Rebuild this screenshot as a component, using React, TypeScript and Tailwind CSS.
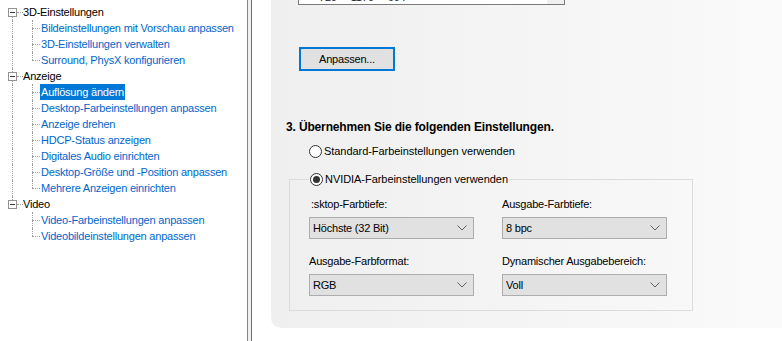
const groups = [
  {
    label: "3D-Einstellungen",
    items: [
      "Bildeinstellungen mit Vorschau anpassen",
      "3D-Einstellungen verwalten",
      "Surround, PhysX konfigurieren",
    ],
  },
  {
    label: "Anzeige",
    items: [
      "Auflösung ändern",
      "Desktop-Farbeinstellungen anpassen",
      "Anzeige drehen",
      "HDCP-Status anzeigen",
      "Digitales Audio einrichten",
      "Desktop-Größe und -Position anpassen",
      "Mehrere Anzeigen einrichten",
    ],
  },
  {
    label: "Video",
    items: ["Video-Farbeinstellungen anpassen", "Videobildeinstellungen anpassen"],
  },
];

const selected = "Auflösung ändern";

function GroupRow({ label, first, last }: { label: string; first: boolean; last: boolean }) {
  return (
    <div className="flex h-4 items-center">
      <div className="flex h-4 w-[17px] flex-col">
        <div className={`ml-[12px] h-[4px] ${first ? "" : "border-l border-dotted border-[#a0a0a0]"}`} />
        <div className="ml-[8px] flex h-[9px] w-[9px] items-center justify-center border border-[#919191] bg-white">
          <div className="h-px w-[5px] bg-[#3c3c3c]" />
        </div>
        <div className={`ml-[12px] flex-1 ${last ? "" : "border-l border-dotted border-[#a0a0a0]"}`} />
      </div>
      <div className="w-[6px] border-t border-dotted border-[#a0a0a0]" />
      <span className="text-black">{label}</span>
    </div>
  );
}

function ItemRow({ label, lastGroup, lastItem }: { label: string; lastGroup: boolean; lastItem: boolean }) {
  const active = label === selected;
  return (
    <div className="flex h-4 items-stretch">
      <div className="w-[12px]" />
      <div className={`w-[20px] ${lastGroup ? "" : "border-l border-dotted border-[#a0a0a0]"}`} />
      <div className="flex w-[8px] flex-col">
        <div className="h-[8px] border-l border-dotted border-[#a0a0a0]" />
        <div className={`flex-1 border-t border-dotted border-[#a0a0a0] ${lastItem ? "" : "border-l"}`} />
      </div>
      <span
        className={`flex items-center px-px leading-4 ${active ? "bg-[#0078d7] text-white" : "text-[#0066cc]"}`}
      >
        {label}
      </span>
    </div>
  );
}

function Radio({ checked, label }: { checked?: boolean; label: string }) {
  return (
    <div className="flex h-4 items-center gap-[2px] px-px">
      <div className="flex h-[13px] w-[13px] items-center justify-center rounded-full border border-[#333] bg-white">
        {checked && <div className="h-[7px] w-[7px] rounded-full bg-[#333]" />}
      </div>
      <span className="tracking-[-0.05px] text-black">{label}</span>
    </div>
  );
}

function Select({ value }: { value: string }) {
  return (
    <div className="flex h-[22px] w-[165px] items-center justify-between border border-[#adadad] bg-[#e1e1e1] pl-[3px] pr-[6px] text-black">
      <span>{value}</span>
      <svg width="10" height="6" viewBox="0 0 10 6">
        <path d="M0.5 0.5 L5 5 L9.5 0.5" fill="none" stroke="#606060" strokeWidth="1" />
      </svg>
    </div>
  );
}

export default function App() {
  return (
    <div className="flex h-[341px] w-[782px] overflow-hidden bg-white font-['Liberation_Sans',Arial,sans-serif] text-[11px] tracking-[-0.2px]">
      {/* tree */}
      <div className="h-full w-[248px] shrink-0 border-r border-[#828790] pt-[4px]">
        {groups.map((g, gi) => (
          <div key={g.label}>
            <GroupRow label={g.label} first={gi === 0} last={gi === groups.length - 1} />
            {g.items.map((it, ii) => (
              <ItemRow
                key={it}
                label={it}
                lastGroup={gi === groups.length - 1}
                lastItem={ii === g.items.length - 1}
              />
            ))}
          </div>
        ))}
      </div>
      {/* splitter */}
      <div className="h-full w-[3px] shrink-0 bg-[#f0f0f0]" />
      <div className="h-full w-px shrink-0 bg-[#6d6d6d]" />
      <div className="w-[19px] shrink-0" />

      {/* settings page */}
      <div className="flex h-[328px] flex-1 flex-col rounded-bl-[10px] bg-linear-to-r from-[#efefef] to-[#fafafa]">
        <div className="ml-[27px] flex h-[5px] w-[267px] items-end overflow-hidden border-x border-b border-[#7a7a7a] bg-white">
          <div className="flex h-[14px] flex-1 gap-[14px] pl-[20px] leading-[14px] text-[#222]">
            <span>720</span>
            <span>1176</span>
            <span>664</span>
          </div>
          <div className="h-full w-[17px] bg-[#f0f0f0]" />
        </div>

        <button className="ml-[28px] mt-[42px] h-[24px] w-[96px] border-2 border-[#0078d7] bg-[#e1e1e1] text-black">
          Anpassen...
        </button>

        <div className="ml-[15px] mt-[48px] text-[12px] font-bold leading-4 tracking-[-0.15px] text-black">
          3. Übernehmen Sie die folgenden Einstellungen.
        </div>

        <div className="ml-[37px] mt-[8px]">
          <Radio label="Standard-Farbeinstellungen verwenden" />
        </div>

        <fieldset className="ml-[18px] mt-[12px] w-[404px] border border-[#dcdcdc] pb-[14px]">
          <legend className="ml-[19px] leading-4">
            <Radio checked label="NVIDIA-Farbeinstellungen verwenden" />
          </legend>
          <div className="grid grid-cols-[165px_165px] gap-x-[28px] pl-[19px] pt-[9px] text-black">
            <div className="pl-[2px] leading-4">:sktop-Farbtiefe:</div>
            <div className="leading-4">Ausgabe-Farbtiefe:</div>
            <div className="mt-[5px]">
              <Select value="Höchste (32 Bit)" />
            </div>
            <div className="mt-[5px]">
              <Select value="8 bpc" />
            </div>
            <div className="mt-[14px] leading-4">Ausgabe-Farbformat:</div>
            <div className="mt-[14px] leading-4">Dynamischer Ausgabebereich:</div>
            <div className="mt-[5px]">
              <Select value="RGB" />
            </div>
            <div className="mt-[5px]">
              <Select value="Voll" />
            </div>
          </div>
        </fieldset>
      </div>
    </div>
  );
}
